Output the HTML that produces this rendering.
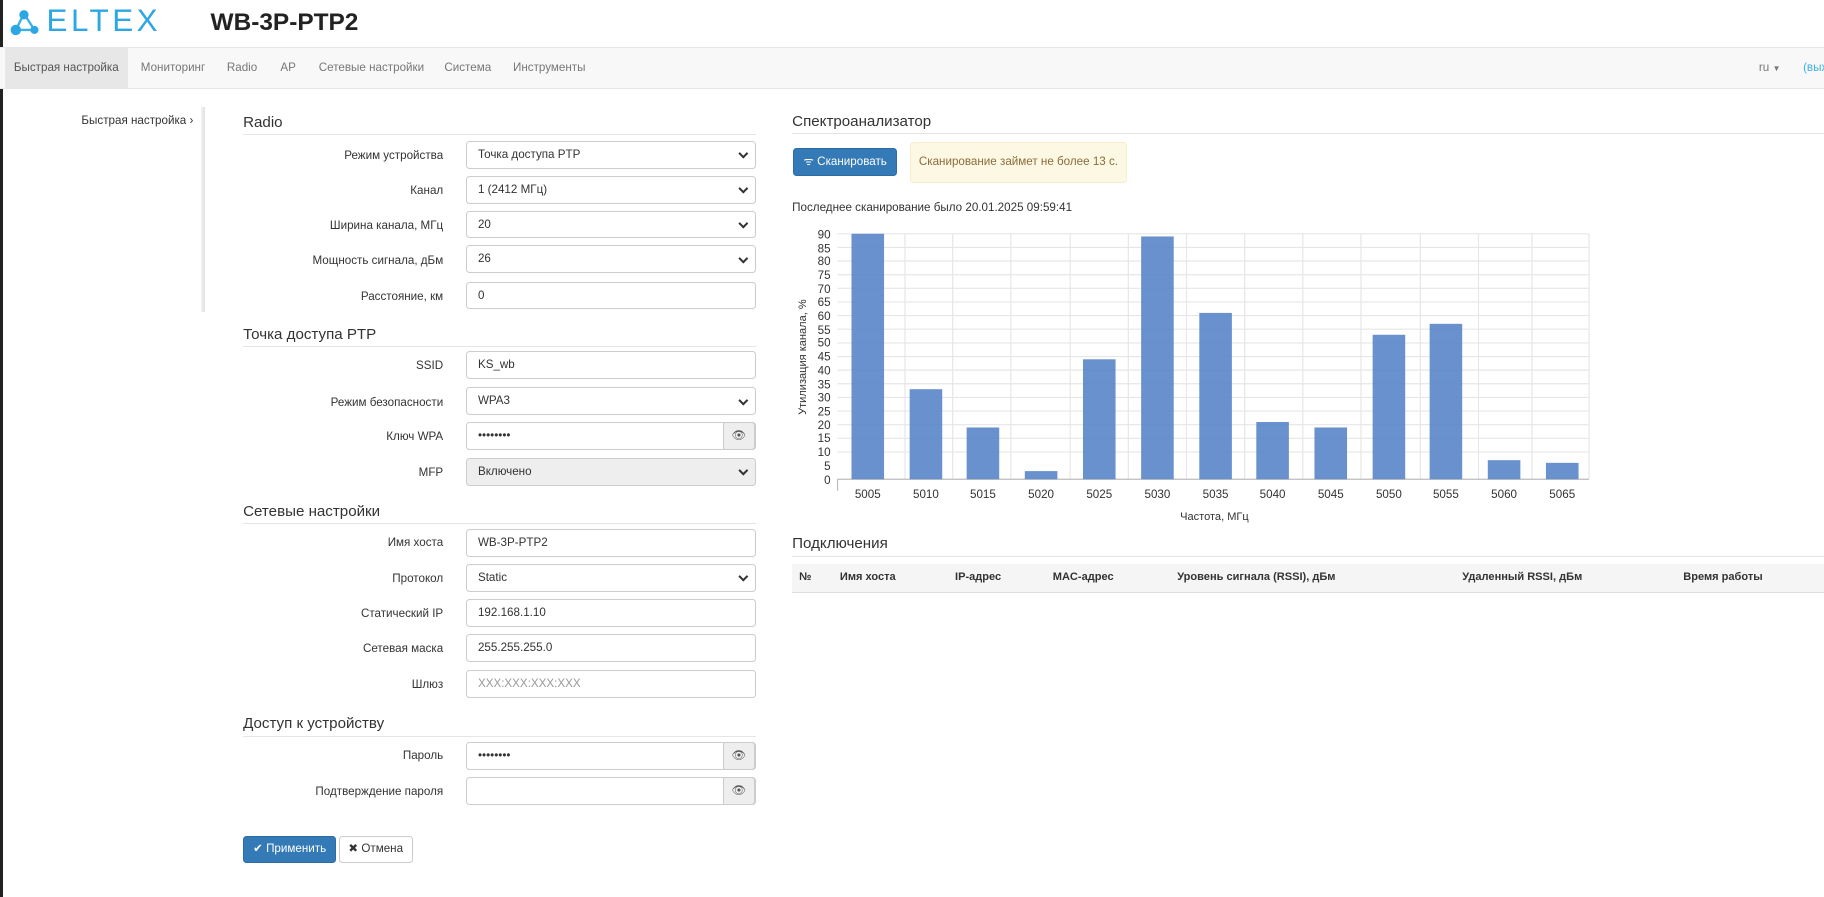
<!DOCTYPE html>
<html><head><meta charset="utf-8">
<style>
html,body{margin:0;padding:0;background:#fff;overflow:hidden}
#w{zoom:1.16327;width:1568px;height:771px;position:relative;font-family:"Liberation Sans",sans-serif;font-size:10px;color:#333}
.a{position:absolute}
.nav{left:0;top:40px;width:1568px;height:35px;background:#f8f8f8;border-top:1px solid #e7e7e7;border-bottom:1px solid #e7e7e7}
.ni{position:absolute;top:0;height:35px;line-height:35px;color:#777;font-size:10px}
.leg{position:absolute;font-size:13px;color:#333;border-bottom:1px solid #e5e5e5;padding-bottom:3px}
.lab{position:absolute;width:180px;left:201px;text-align:right;font-size:10px}
.inp{position:absolute;left:401px;width:249px;height:24px;border:1px solid #ccc;border-radius:3px;box-sizing:border-box;padding-left:9px;line-height:23px;font-size:10px;background:#fff}
.sel:after{content:"";position:absolute;right:7px;top:7px;width:4px;height:4px;border-right:2px solid #333;border-bottom:2px solid #333;transform:rotate(45deg)}
.eye{position:absolute;right:0;top:-1px;width:28px;height:24px;border:1px solid #ccc;border-radius:0 3px 3px 0;background:#eee;box-sizing:border-box;text-align:center;line-height:22px;font-size:10px;color:#555}
.th{position:absolute;top:491px;font-weight:bold;font-size:9.5px}
</style></head><body><div id="w">
<div class="a" style="left:0;top:0;width:3px;height:771px;background:#222"></div>
<svg class="a" style="left:9px;top:8px" width="26" height="24" viewBox="0 0 26 24">
<line x1="12" y1="4" x2="5" y2="18" stroke="#3ab0e8" stroke-width="2"/><line x1="12" y1="4" x2="21" y2="18" stroke="#3ab0e8" stroke-width="2"/><line x1="5" y1="18" x2="21" y2="18" stroke="#3ab0e8" stroke-width="2"/>
<circle cx="12" cy="5" r="4" fill="#2da7e3"/><circle cx="5" cy="18" r="4.5" fill="#2da7e3"/><circle cx="21" cy="18" r="3.5" fill="#2da7e3"/></svg>
<div class="a" style="left:40px;top:3px;font-size:27px;color:#2da7e3;letter-spacing:3px">ELTEX</div>
<div class="a" style="left:181px;top:8px;font-size:21px;font-weight:bold;color:#222">WB-3P-PTP2</div>
<div class="a nav">
<div class="ni" style="left:4px;width:106px;background:#e7e7e7;color:#555;text-align:center">Быстрая настройка</div>
<div class="ni" style="left:121px">Мониторинг</div>
<div class="ni" style="left:195px">Radio</div>
<div class="ni" style="left:241px">AP</div>
<div class="ni" style="left:274px">Сетевые настройки</div>
<div class="ni" style="left:382px">Система</div>
<div class="ni" style="left:441px">Инструменты</div>
<div class="ni" style="left:1512px">ru <span style="font-size:7px">▼</span></div>
<div class="ni" style="left:1550px;color:#3ab0e8">(вых</div>
</div>
<div class="a" style="left:70px;top:98px;font-size:10px">Быстрая настройка ›</div>
<div class="a" style="left:173px;top:92px;width:3px;height:176px;background:linear-gradient(90deg,#f2f2f2,#e2e2e2)"></div>

<div class="leg" style="left:209px;top:98px;width:441px">Radio</div>
<div class="lab" style="top:128px">Режим устройства</div><div class="inp sel" style="top:121px">Точка доступа PTP</div>
<div class="lab" style="top:158px">Канал</div><div class="inp sel" style="top:151px">1 (2412 МГц)</div>
<div class="lab" style="top:188px">Ширина канала, МГц</div><div class="inp sel" style="top:181px">20</div>
<div class="lab" style="top:218px">Мощность сигнала, дБм</div><div class="inp sel" style="top:211px">26</div>
<div class="lab" style="top:249px">Расстояние, км</div><div class="inp" style="top:242px">0</div>

<div class="leg" style="left:209px;top:280px;width:441px">Точка доступа PTP</div>
<div class="lab" style="top:309px">SSID</div><div class="inp" style="top:302px">KS_wb</div>
<div class="lab" style="top:340px">Режим безопасности</div><div class="inp sel" style="top:333px">WPA3</div>
<div class="lab" style="top:370px">Ключ WPA</div><div class="inp" style="top:363px">••••••••<div class="eye">👁</div></div>
<div class="lab" style="top:401px">MFP</div><div class="inp sel" style="top:394px;background:#eee">Включено</div>

<div class="leg" style="left:209px;top:432px;width:441px">Сетевые настройки</div>
<div class="lab" style="top:461px">Имя хоста</div><div class="inp" style="top:455px">WB-3P-PTP2</div>
<div class="lab" style="top:492px">Протокол</div><div class="inp sel" style="top:485px">Static</div>
<div class="lab" style="top:522px">Статический IP</div><div class="inp" style="top:515px">192.168.1.10</div>
<div class="lab" style="top:552px">Сетевая маска</div><div class="inp" style="top:545px">255.255.255.0</div>
<div class="lab" style="top:583px">Шлюз</div><div class="inp" style="top:576px;color:#999">XXX:XXX:XXX:XXX</div>

<div class="leg" style="left:209px;top:615px;width:441px">Доступ к устройству</div>
<div class="lab" style="top:644px">Пароль</div><div class="inp" style="top:638px">••••••••<div class="eye">👁</div></div>
<div class="lab" style="top:675px">Подтверждение пароля</div><div class="inp" style="top:668px"><div class="eye">👁</div></div>

<div class="a" style="left:209px;top:719px;width:80px;height:23px;background:#337ab7;border:1px solid #2e6da4;border-radius:3px;box-sizing:border-box;color:#fff;text-align:center;line-height:21px;font-size:10px">✔ Применить</div>
<div class="a" style="left:291px;top:719px;width:64px;height:23px;background:#fff;border:1px solid #ccc;border-radius:3px;box-sizing:border-box;text-align:center;line-height:21px;font-size:10px">✖ Отмена</div>

<div class="leg" style="left:681px;top:97px;width:887px">Спектроанализатор</div>
<div class="a" style="left:682px;top:127px;width:89px;height:24px;background:#337ab7;border:1px solid #2e6da4;border-radius:3px;box-sizing:border-box;color:#fff;text-align:center;line-height:22px;font-size:10px">ᯤ Сканировать</div>
<div class="a" style="left:782px;top:122px;width:187px;height:35px;background:#fcf8e3;border:1px solid #faebcc;border-radius:3px;box-sizing:border-box;color:#8a6d3b;text-align:center;line-height:33px;font-size:10px">Сканирование займет не более 13 с.</div>
<div class="a" style="left:681px;top:173px;font-size:10px">Последнее сканирование было 20.01.2025 09:59:41</div>

<svg class="a" style="left:680px;top:190px" width="700" height="265" font-family="Liberation Sans" font-size="10" fill="#333">
<g stroke="#e6e6e6" stroke-width="1">
<line x1="40" y1="11" x2="686" y2="11"/><line x1="40" y1="22.7" x2="686" y2="22.7"/><line x1="40" y1="34.4" x2="686" y2="34.4"/><line x1="40" y1="46.2" x2="686" y2="46.2"/><line x1="40" y1="57.9" x2="686" y2="57.9"/><line x1="40" y1="69.6" x2="686" y2="69.6"/><line x1="40" y1="81.3" x2="686" y2="81.3"/><line x1="40" y1="93" x2="686" y2="93"/><line x1="40" y1="104.8" x2="686" y2="104.8"/><line x1="40" y1="116.5" x2="686" y2="116.5"/><line x1="40" y1="128.2" x2="686" y2="128.2"/><line x1="40" y1="139.9" x2="686" y2="139.9"/><line x1="40" y1="151.7" x2="686" y2="151.7"/><line x1="40" y1="163.4" x2="686" y2="163.4"/><line x1="40" y1="175.1" x2="686" y2="175.1"/><line x1="40" y1="186.8" x2="686" y2="186.8"/><line x1="40" y1="198.5" x2="686" y2="198.5"/>
<line x1="98" y1="11" x2="98" y2="222"/><line x1="139" y1="11" x2="139" y2="222"/><line x1="189" y1="11" x2="189" y2="222"/><line x1="240" y1="11" x2="240" y2="222"/><line x1="290" y1="11" x2="290" y2="222"/><line x1="340" y1="11" x2="340" y2="222"/><line x1="390" y1="11" x2="390" y2="222"/><line x1="440" y1="11" x2="440" y2="222"/><line x1="490" y1="11" x2="490" y2="222"/><line x1="541" y1="11" x2="541" y2="222"/><line x1="591" y1="11" x2="591" y2="222"/><line x1="637" y1="11" x2="637" y2="222"/><line x1="686" y1="11" x2="686" y2="222"/>
</g>
<line x1="40" y1="222" x2="686" y2="222" stroke="#bbb"/><line x1="40" y1="222" x2="40" y2="232" stroke="#bbb"/>
<g fill="#5b88c9" fill-opacity="0.92">
<rect x="52" y="11" width="28" height="211"/><rect x="102" y="144.6" width="28" height="77.4"/><rect x="151" y="177.5" width="28" height="44.5"/><rect x="201" y="215" width="28" height="7"/><rect x="251" y="118.9" width="28" height="103.1"/><rect x="301" y="13.3" width="28" height="208.7"/><rect x="351" y="79" width="28" height="143"/><rect x="400" y="172.8" width="28" height="49.2"/><rect x="450" y="177.5" width="28" height="44.5"/><rect x="500" y="97.8" width="28" height="124.2"/><rect x="549" y="88.4" width="28" height="133.6"/><rect x="599" y="205.6" width="28" height="16.4"/><rect x="649" y="207.9" width="28" height="14.1"/>
</g>
<g text-anchor="end" font-size="10"><text x="34" y="15">90</text><text x="34" y="27">85</text><text x="34" y="38">80</text><text x="34" y="50">75</text><text x="34" y="62">70</text><text x="34" y="73">65</text><text x="34" y="85">60</text><text x="34" y="97">55</text><text x="34" y="108">50</text><text x="34" y="120">45</text><text x="34" y="132">40</text><text x="34" y="144">35</text><text x="34" y="155">30</text><text x="34" y="167">25</text><text x="34" y="179">20</text><text x="34" y="190">15</text><text x="34" y="202">10</text><text x="34" y="214">5</text><text x="34" y="226">0</text></g>
<g text-anchor="middle" font-size="10"><text x="66" y="238">5005</text><text x="116" y="238">5010</text><text x="165" y="238">5015</text><text x="215" y="238">5020</text><text x="265" y="238">5025</text><text x="315" y="238">5030</text><text x="365" y="238">5035</text><text x="414" y="238">5040</text><text x="464" y="238">5045</text><text x="514" y="238">5050</text><text x="563" y="238">5055</text><text x="613" y="238">5060</text><text x="663" y="238">5065</text>
<text x="364" y="257" font-size="9.5">Частота, МГц</text>
<text transform="translate(13,117) rotate(-90)" font-size="9.5">Утилизация канала, %</text></g>
</svg>

<div class="leg" style="left:681px;top:460px;width:887px">Подключения</div>
<div class="a" style="left:681px;top:485px;width:887px;height:24px;background:#f5f5f5;border-bottom:1px solid #ddd"></div>
<div class="th" style="left:687px">№</div><div class="th" style="left:722px">Имя хоста</div><div class="th" style="left:821px">IP-адрес</div><div class="th" style="left:905px">MAC-адрес</div><div class="th" style="left:1012px">Уровень сигнала (RSSI), дБм</div><div class="th" style="left:1257px">Удаленный RSSI, дБм</div><div class="th" style="left:1447px">Время работы</div>
</div></body></html>
